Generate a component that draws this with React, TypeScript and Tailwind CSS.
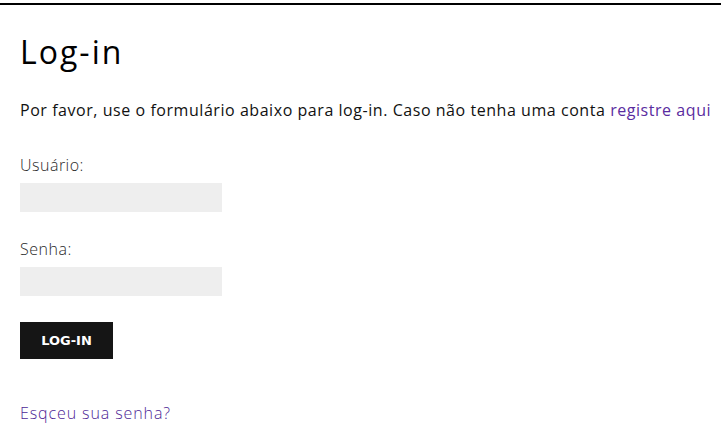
import React from 'react';

const font = { fontFamily: '"Open Sans", "Noto Sans", sans-serif' };

export default function App() {
  return (
    <div className="min-h-[425px] w-full bg-white pt-[3px]" style={font}>
      <div className="border-t-2 border-black px-5">
        <h1 className="mt-[23px] text-[32px] leading-[48px] font-normal tracking-[2px] text-black">Log-in</h1>

        <p className="mt-[22px] whitespace-nowrap text-[16px] leading-6 tracking-[0.55px] text-[#111]">
          Por favor, use o formulário abaixo para log-in. Caso não tenha uma conta{' '}
          <a href="#" className="text-[#5a2ca0]">registre aqui</a>
        </p>

        <form className="mt-[31px] flex flex-col" onSubmit={(e) => e.preventDefault()}>
          <label className="text-[16px] leading-6 font-light tracking-[0.5px] text-[#2a2a2a]" htmlFor="usuario">
            Usuário:
          </label>
          <input id="usuario" className="mt-[6px] h-[29px] w-[202px] bg-[#eeeeee] outline-none" />

          <label className="mt-[25px] text-[16px] leading-6 font-light tracking-[0.5px] text-[#2a2a2a]" htmlFor="senha">
            Senha:
          </label>
          <input id="senha" type="password" className="mt-[6px] h-[29px] w-[202px] bg-[#eeeeee] outline-none" />

          <button
            type="submit"
            className="mt-[26px] h-[37px] w-[93px] bg-[#151515] text-[13px] font-bold text-white"
            style={{ fontFamily: '"DejaVu Sans", sans-serif' }}
          >
            LOG-IN
          </button>
        </form>

        <a href="#" className="mt-[42px] block text-[16px] leading-6 font-light tracking-[0.9px] text-[#4e1f96]">
          Esqceu sua senha?
        </a>
      </div>
    </div>
  );
}
